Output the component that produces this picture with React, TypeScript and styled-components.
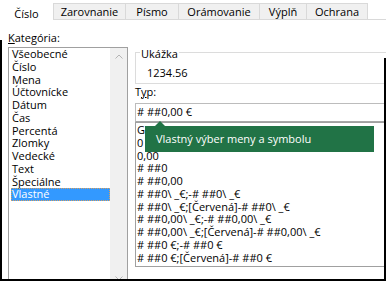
import styled, { createGlobalStyle } from 'styled-components';

const GlobalStyle = createGlobalStyle`
  html, body {
    margin: 0;
    padding: 0;
    background: #fff;
  }
`;

const TABS = ['Číslo', 'Zarovnanie', 'Písmo', 'Orámovanie', 'Výplň', 'Ochrana'];
const TAB_WIDTHS = [53, 72, 53, 81, 47, 62];

const CATEGORIES = [
  'Všeobecné',
  'Číslo',
  'Mena',
  'Účtovnícke',
  'Dátum',
  'Čas',
  'Percentá',
  'Zlomky',
  'Vedecké',
  'Text',
  'Špeciálne',
  'Vlastné',
];

const FORMATS = [
  'General',
  '0',
  '0,00',
  '# ##0',
  '# ##0,00',
  '# ##0\\ _€;-# ##0\\ _€',
  '# ##0\\ _€;[Červená]-# ##0\\ _€',
  '# ##0,00\\ _€;-# ##0,00\\ _€',
  '# ##0,00\\ _€;[Červená]-# ##0,00\\ _€',
  '# ##0 €;-# ##0 €',
  '# ##0 €;[Červená]-# ##0 €',
];

const Frame = styled.div`
  position: relative;
  width: 386px;
  height: 281px;
  box-sizing: border-box;
  overflow: hidden;
  background: #fff;
  border-bottom: 2px solid #000;
  font-family: "Open Sans", "Noto Sans", sans-serif;
  font-size: 11px;
  color: #000;

  &::before {
    content: '';
    position: absolute;
    left: 0;
    top: 40px;
    bottom: 0;
    width: 2px;
    background: #000;
    z-index: 5;
  }

  &::after {
    content: '';
    position: absolute;
    right: 0;
    top: 58px;
    bottom: 0;
    width: 2px;
    background: #000;
    z-index: 5;
  }
`;

const TabStrip = styled.div`
  height: 19px;
  display: flex;
  align-items: flex-end;
  border-bottom: 1px solid #d9d9d9;
`;

const Tab = styled.div<{ $width: number; $active?: boolean; $last?: boolean }>`
  width: ${p => p.$width}px;
  height: ${p => (p.$active ? 17 : 16)}px;
  margin-bottom: ${p => (p.$active ? -1 : 0)}px;
  box-sizing: border-box;
  padding-top: ${p => (p.$active ? 2 : 0)}px;
  background: ${p => (p.$active ? '#fff' : '#f0f0f0')};
  border-top: 1px solid ${p => (p.$active ? '#fff' : '#d9d9d9')};
  border-left: ${p => (p.$active ? 'none' : '1px solid #d9d9d9')};
  border-right: ${p => (p.$last ? '1px solid #d9d9d9' : 'none')};
  line-height: 15px;
  text-align: center;
  white-space: nowrap;
`;

const Body = styled.div`
  display: flex;
  column-gap: 7px;
  padding: 10px 0 0 8px;
`;

const LeftColumn = styled.div`
  width: 120px;
  flex-shrink: 0;
  display: flex;
  flex-direction: column;
`;

const RightColumn = styled.div`
  width: 270px;
  flex-shrink: 0;
  display: flex;
  flex-direction: column;
`;

const Label = styled.div`
  line-height: 15px;
  white-space: nowrap;
`;

const AccessKey = styled.span`
  text-decoration: underline;
`;

const ListBox = styled.div`
  margin-top: 2px;
  height: 241px;
  box-sizing: border-box;
  border: 1px solid #a0a0a0;
  display: flex;
`;

const ListItems = styled.div`
  flex: 1;
`;

const CategoryItem = styled.div<{ $selected?: boolean }>`
  height: 12.75px;
  line-height: 12.75px;
  margin-left: 2px;
  padding-left: 1px;
  box-sizing: border-box;
  white-space: nowrap;
  background: ${p => (p.$selected ? '#3399ff' : 'transparent')};
  color: ${p => (p.$selected ? '#fff' : '#000')};
  outline: ${p => (p.$selected ? '1px dotted #d8a060' : 'none')};
  outline-offset: -1px;
`;

const ScrollBar = styled.div`
  width: 17px;
  background: #f0f0f0;
  display: flex;
  flex-direction: column;
  justify-content: space-between;
`;

const ScrollButton = styled.div`
  height: 17px;
  display: flex;
  align-items: center;
  justify-content: center;
`;

const GroupBox = styled.div`
  margin-top: 22px;
  height: 32px;
  box-sizing: border-box;
  border: 1px solid #dcdcdc;
  padding-left: 11px;
`;

const Legend = styled.div`
  display: table;
  margin: -6px 0 0 -7px;
  padding: 0 1px;
  background: #fff;
  line-height: 13px;
`;

const Sample = styled.div`
  margin-top: 5px;
  line-height: 15px;
`;

const TypeInput = styled.div`
  margin-top: 4px;
  height: 19px;
  box-sizing: border-box;
  border: 1px solid #bcbcbc;
  border-bottom-color: #a8a8a8;
  padding-left: 1px;
  line-height: 15px;
  white-space: nowrap;
`;

const FormatList = styled.div`
  height: 145px;
  box-sizing: border-box;
  border: 1px solid #a0a0a0;
  padding: 1px 0 0 1px;
`;

const FormatItem = styled.div`
  height: 12.75px;
  line-height: 12.75px;
  white-space: nowrap;
`;

const Tooltip = styled.div`
  position: absolute;
  left: 145px;
  top: 126px;
  width: 229px;
  height: 26px;
  box-sizing: border-box;
  padding-left: 11px;
  background: #217346;
  color: #fff;
  line-height: 26px;
  white-space: nowrap;
  z-index: 4;

  &::before {
    content: '';
    position: absolute;
    left: 10px;
    top: -5px;
    border-left: 5px solid transparent;
    border-right: 5px solid transparent;
    border-bottom: 5px solid #217346;
  }
`;

const Chevron = ({ down }: { down?: boolean }) => (
  <svg width="8" height="5" viewBox="0 0 8 5">
    <path
      d={down ? 'M0.5 0.5 L4 4 L7.5 0.5' : 'M0.5 4.5 L4 1 L7.5 4.5'}
      fill="none"
      stroke="#b4b4b4"
      strokeWidth="1"
    />
  </svg>
);

const App = () => {
  return (
    <Frame>
      <GlobalStyle />
      <TabStrip>
        {TABS.map((tab, i) => (
          <Tab
            key={tab}
            $width={TAB_WIDTHS[i]}
            $active={i === 0}
            $last={i === TABS.length - 1}
          >
            {tab}
          </Tab>
        ))}
      </TabStrip>
      <Body>
        <LeftColumn>
          <Label>
            <AccessKey>K</AccessKey>ategória:
          </Label>
          <ListBox>
            <ListItems>
              {CATEGORIES.map(cat => (
                <CategoryItem key={cat} $selected={cat === 'Vlastné'}>
                  {cat}
                </CategoryItem>
              ))}
            </ListItems>
            <ScrollBar>
              <ScrollButton>
                <Chevron />
              </ScrollButton>
              <ScrollButton>
                <Chevron down />
              </ScrollButton>
            </ScrollBar>
          </ListBox>
        </LeftColumn>
        <RightColumn>
          <GroupBox>
            <Legend>Ukážka</Legend>
            <Sample>1234.56</Sample>
          </GroupBox>
          <Label>
            T<AccessKey>y</AccessKey>p:
          </Label>
          <TypeInput># ##0,00 €</TypeInput>
          <FormatList>
            {FORMATS.map(f => (
              <FormatItem key={f}>{f}</FormatItem>
            ))}
          </FormatList>
        </RightColumn>
      </Body>
      <Tooltip>Vlastný výber meny a symbolu</Tooltip>
    </Frame>
  );
};

export default App;
